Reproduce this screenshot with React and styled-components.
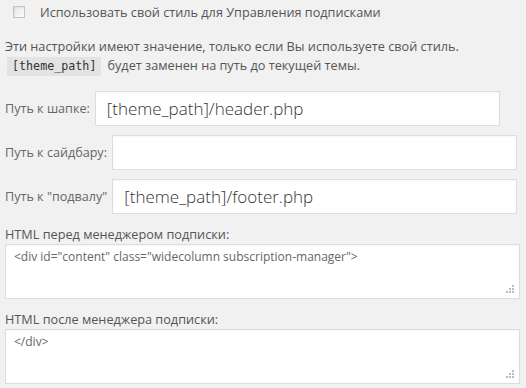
import React from "react";
import styled, { createGlobalStyle } from "styled-components";

const Global = createGlobalStyle`
  html, body {
    margin: 0;
    padding: 0;
    background: #f1f1f1;
  }
  body {
    font-family: "Open Sans", "Liberation Sans", sans-serif;
    color: #444;
  }
`;

const Page = styled.div`
  width: 526px;
  height: 388px;
  overflow: hidden;
  padding: 0 6px 0 5px;
  box-sizing: border-box;
`;

const CheckRow = styled.label`
  display: flex;
  align-items: center;
  gap: 15px;
  padding: 5px 0 0 8px;
  height: 14px;
  font-size: 12.7px;
  color: #555;
`;

const Box = styled.span`
  width: 10px;
  height: 10px;
  border: 1px solid #c4c4c4;
  background: linear-gradient(135deg, #e8e8e8, #fbfbfb);
  box-shadow: inset 1px 1px 2px rgba(0, 0, 0, 0.06);
`;

const Note = styled.p`
  margin: 18px 0 0;
  font-size: 12.7px;
  line-height: 19px;
  color: #555;
`;

const Code = styled.code`
  display: inline-block;
  margin: 0 6px 0 2px;
  padding: 0 5px;
  line-height: 19px;
  background: #e3e3e3;
  font-family: "DejaVu Sans Mono", "Liberation Mono", monospace;
  font-size: 11.7px;
  color: #333;
`;

const Field = styled.div`
  display: flex;
  align-items: center;
  gap: 5px;
  margin-top: ${(p) => p.$top}px;
`;

const FieldLabel = styled.span`
  font-size: 12.6px;
  color: #666;
  white-space: nowrap;
`;

const Input = styled.div`
  width: 405px;
  height: 35px;
  box-sizing: border-box;
  border: 1px solid #ddd;
  background: #fff;
  box-shadow: inset 0 1px 2px rgba(0, 0, 0, 0.04);
  padding: 0 11px;
  display: flex;
  align-items: center;
  font-size: 17px;
  font-weight: 300;
  color: #333;
`;

const AreaLabel = styled.div`
  margin-top: ${(p) => p.$top}px;
  font-size: 12.7px;
  line-height: 18px;
  color: #555;
`;

const Area = styled.div`
  position: relative;
  margin-top: 1px;
  height: 55px;
  box-sizing: border-box;
  border: 1px solid #ddd;
  background: #fff;
  box-shadow: inset 0 1px 2px rgba(0, 0, 0, 0.04);
  padding: 4px 8px;
  font-size: 12px;
  line-height: 15px;
  color: #666;
`;

const Grip = styled.svg`
  position: absolute;
  right: 5px;
  bottom: 5px;
`;

function Handle() {
  const dots = [
    [8, 0],
    [8, 3],
    [5, 3],
    [8, 6],
    [5, 6],
    [2, 6],
  ];
  return (
    <Grip width="10" height="8" viewBox="0 0 10 8">
      {dots.map(([x, y], i) => (
        <rect key={i} x={x} y={y} width="2" height="2" fill="#bbb" />
      ))}
    </Grip>
  );
}

export default function App() {
  return (
    <>
      <Global />
      <Page>
        <CheckRow>
          <Box />
          Использовать свой стиль для Управления подписками
        </CheckRow>
        <Note>
          Эти настройки имеют значение, только если Вы используете свой стиль.
          <br />
          <Code>[theme_path]</Code>будет заменен на путь до текущей темы.
        </Note>
        <Field $top={15}>
          <FieldLabel>Путь к шапке:</FieldLabel>
          <Input>[theme_path]/header.php</Input>
        </Field>
        <Field $top={9}>
          <FieldLabel>Путь к сайдбару:</FieldLabel>
          <Input />
        </Field>
        <Field $top={9}>
          <FieldLabel>Путь к "подвалу"</FieldLabel>
          <Input>[theme_path]/footer.php</Input>
        </Field>
        <AreaLabel $top={11}>HTML перед менеджером подписки:</AreaLabel>
        <Area>
          &lt;div id="content" class="widecolumn subscription-manager"&gt;
          <Handle />
        </Area>
        <AreaLabel $top={11}>HTML после менеджера подписки:</AreaLabel>
        <Area>
          &lt;/div&gt;
          <Handle />
        </Area>
      </Page>
    </>
  );
}
